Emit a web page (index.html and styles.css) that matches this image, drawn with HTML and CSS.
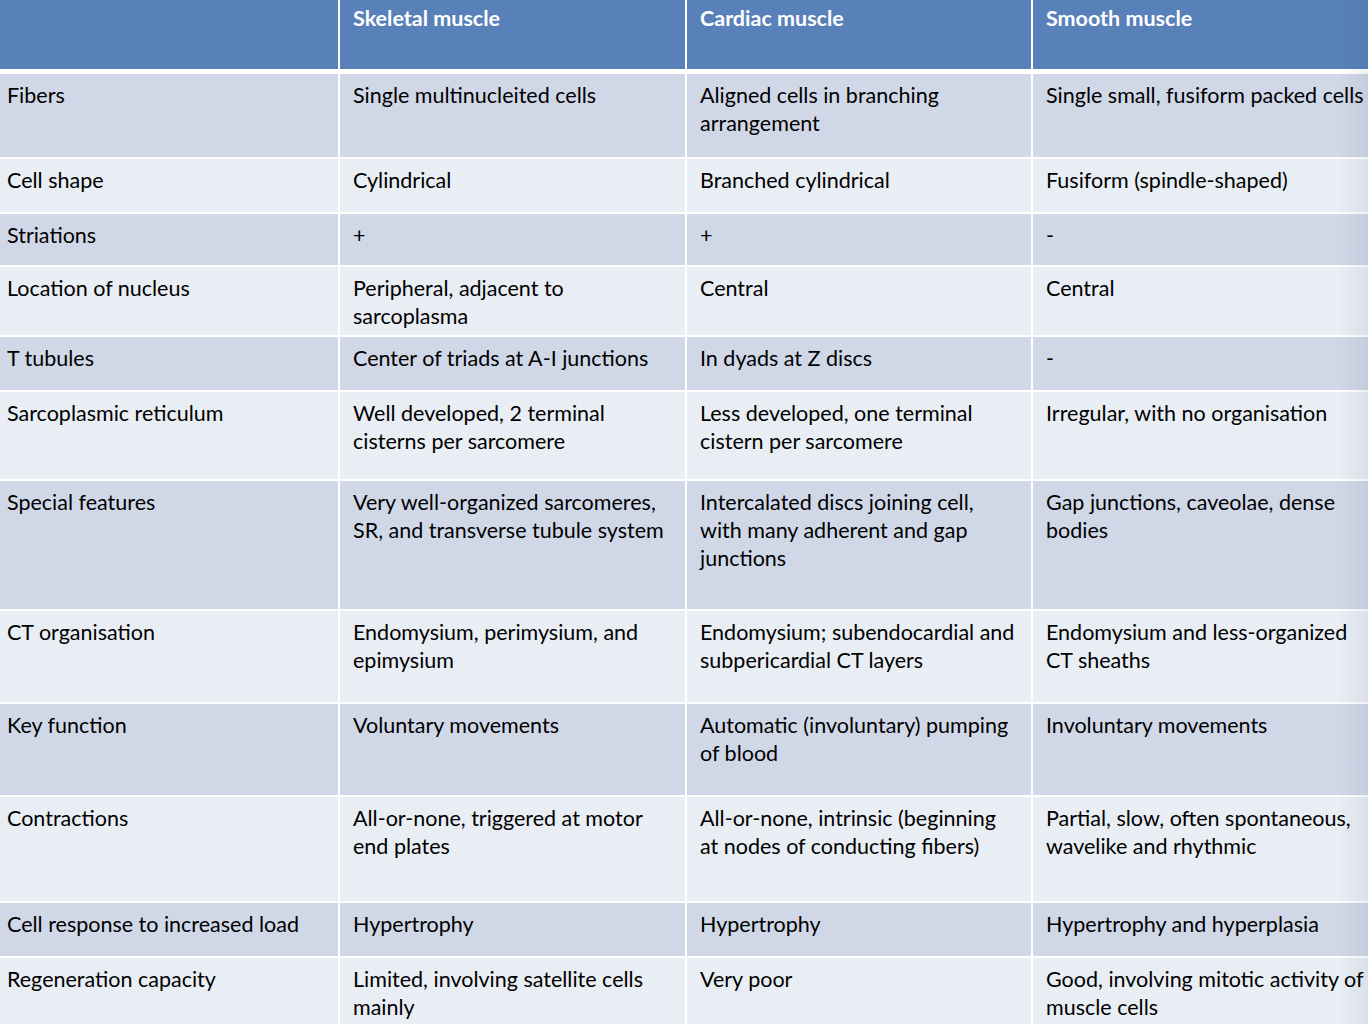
FILE: index.html
```html
<!DOCTYPE html>
<html lang="en">
<head>
<meta charset="utf-8">
<title>Muscle types</title>
<link rel="stylesheet" href="styles.css">
</head>
<body>
<div class="slide">
  <div class="grid">
    <div class="row head">
      <div class="cell first"></div>
      <div class="cell">Skeletal muscle</div>
      <div class="cell">Cardiac muscle</div>
      <div class="cell">Smooth muscle</div>
    </div>
    <div class="row dark">
      <div class="cell first">Fibers</div>
      <div class="cell">Single multinucleited cells</div>
      <div class="cell">Aligned cells in branching arrangement</div>
      <div class="cell">Single small, fusiform packed cells</div>
    </div>
    <div class="row light">
      <div class="cell first">Cell shape</div>
      <div class="cell">Cylindrical</div>
      <div class="cell">Branched cylindrical</div>
      <div class="cell">Fusiform (spindle-shaped)</div>
    </div>
    <div class="row dark">
      <div class="cell first">Striations</div>
      <div class="cell">+</div>
      <div class="cell">+</div>
      <div class="cell">-</div>
    </div>
    <div class="row light">
      <div class="cell first">Location of nucleus</div>
      <div class="cell">Peripheral, adjacent to sarcoplasma</div>
      <div class="cell">Central</div>
      <div class="cell">Central</div>
    </div>
    <div class="row dark">
      <div class="cell first">T tubules</div>
      <div class="cell">Center of triads at A-I junctions</div>
      <div class="cell">In dyads at Z discs</div>
      <div class="cell">-</div>
    </div>
    <div class="row light">
      <div class="cell first">Sarcoplasmic reticulum</div>
      <div class="cell">Well developed, 2 terminal cisterns per sarcomere</div>
      <div class="cell">Less developed, one terminal cistern per sarcomere</div>
      <div class="cell">Irregular, with no organisation</div>
    </div>
    <div class="row dark">
      <div class="cell first">Special features</div>
      <div class="cell">Very well-organized sarcomeres, SR, and transverse tubule system</div>
      <div class="cell">Intercalated discs joining cell, with many adherent and gap junctions</div>
      <div class="cell">Gap junctions, caveolae, dense bodies</div>
    </div>
    <div class="row light">
      <div class="cell first">CT organisation</div>
      <div class="cell">Endomysium, perimysium, and epimysium</div>
      <div class="cell">Endomysium; subendocardial and subpericardial CT layers</div>
      <div class="cell">Endomysium and less-organized CT sheaths</div>
    </div>
    <div class="row dark">
      <div class="cell first">Key function</div>
      <div class="cell">Voluntary movements</div>
      <div class="cell">Automatic (involuntary) pumping of blood</div>
      <div class="cell">Involuntary movements</div>
    </div>
    <div class="row light">
      <div class="cell first">Contractions</div>
      <div class="cell">All-or-none, triggered at motor end plates</div>
      <div class="cell">All-or-none, intrinsic (beginning at nodes of conducting fibers)</div>
      <div class="cell">Partial, slow, often spontaneous, wavelike and rhythmic</div>
    </div>
    <div class="row dark">
      <div class="cell first">Cell response to increased load</div>
      <div class="cell">Hypertrophy</div>
      <div class="cell">Hypertrophy</div>
      <div class="cell">Hypertrophy and hyperplasia</div>
    </div>
    <div class="row light">
      <div class="cell first">Regeneration capacity</div>
      <div class="cell">Limited, involving satellite cells mainly</div>
      <div class="cell">Very poor</div>
      <div class="cell">Good, involving mitotic activity of muscle cells</div>
    </div>
  </div>
  <div class="edge-shade"></div>
</div>
</body>
</html>
```

FILE: styles.css
```css
html, body {
  margin: 0;
  padding: 0;
  background: #ffffff;
}

body {
  width: 1368px;
  height: 1024px;
  overflow: hidden;
  font-family: Lato, "Open Sans", "Liberation Sans", sans-serif;
  font-size: 21.5px;
  color: #000000;
}

.slide {
  position: relative;
  width: 1368px;
  height: 1024px;
  overflow: hidden;
}

.grid {
  display: grid;
  grid-template-columns: 338px 345px 344px 335px;
  grid-template-rows: 72px 83px 53px 51px 68px 53px 87px 128px 91px 91px 104px 53px 80px;
  column-gap: 2px;
  row-gap: 2px;
  background: #ffffff;
}

.row {
  display: contents;
}

.cell {
  padding: 6.5px 8px 0 13px;
  line-height: 28px;
  overflow: hidden;
}

.cell.first {
  padding-left: 7px;
}

.cell:nth-child(3) {
  padding-right: 14px;
}

.cell:nth-child(4) {
  padding-right: 0;
}

.head .cell {
  background: #5881ba;
  color: #ffffff;
  font-weight: 700;
  padding-top: 4px;
  margin-bottom: 3px;
}

.dark .cell {
  background: #d0d8e8;
}

.light .cell {
  background: #e9edf4;
}

.edge-shade {
  position: absolute;
  top: 0;
  right: 0;
  width: 30px;
  height: 1024px;
  background: linear-gradient(to right, rgba(40, 50, 70, 0), rgba(40, 50, 70, 0.07));
  pointer-events: none;
}
```
